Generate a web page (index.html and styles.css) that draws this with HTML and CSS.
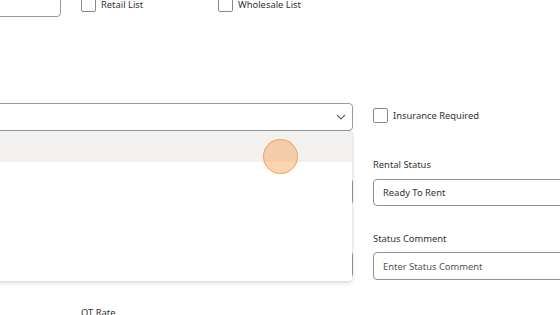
FILE: index.html
```html
<!DOCTYPE html>
<html>
<head>
<meta charset="utf-8">
<link rel="stylesheet" href="styles.css">
</head>
<body>
<div class="page">
  <div class="row row-top">
    <div class="box-input"></div>
    <label class="check check-retail"><span class="cb"></span><span>Retail List</span></label>
    <label class="check"><span class="cb"></span><span>Wholesale List</span></label>
  </div>

  <div class="grid">
    <div class="left">
      <div class="select">
        <svg class="chev" width="10" height="6" viewBox="0 0 10 6"><path d="M1 1 L5 5 L9 1" fill="none" stroke="#666" stroke-width="1.1"/></svg>
      </div>
      <div class="under under-1"></div>
      <div class="under under-2"></div>
      <div class="ot-label">OT Rate</div>

      <div class="menu">
        <div class="menu-item active"></div>
      </div>
      <div class="touch"></div>
    </div>

    <div class="right">
      <label class="check check-ins"><span class="cb"></span><span>Insurance Required</span></label>
      <div class="field-label fl-1">Rental Status</div>
      <div class="input">Ready To Rent</div>
      <div class="field-label fl-2">Status Comment</div>
      <div class="input input-2 placeholder">Enter Status Comment</div>
    </div>
  </div>
</div>
</body>
</html>
```

FILE: styles.css
```css
* { box-sizing: border-box; }
html, body { margin: 0; padding: 0; background: #fff; overflow: hidden; }
body {
  font-family: "Noto Sans", "Open Sans", sans-serif;
  font-size: 9.4px;
  color: #333;
  width: 560px;
  height: 315px;
}
.page { margin-left: -20px; width: 700px; }

.row-top {
  display: flex;
  align-items: flex-start;
  margin-top: -19px;
  height: 36px;
}
.box-input {
  width: 81px;
  height: 36px;
  border: 1px solid #9a9a9a;
  border-radius: 4px;
  flex: none;
}
.check {
  display: flex;
  align-items: center;
  gap: 5px;
  line-height: 15px;
  color: #333;
  white-space: nowrap;
}
.row-top .check { margin-top: 16px; }
.check-retail { margin-left: 20px; width: 137px; }
.cb {
  width: 15px;
  height: 15px;
  border: 1px solid #8a8a8a;
  border-radius: 2px;
  flex: none;
  background: #fff;
}

.grid {
  display: grid;
  grid-template-columns: 373px 1fr;
  column-gap: 20px;
  margin-top: 86px;
}
.left { position: relative; }
.select {
  height: 28px;
  border: 1px solid #9a9a9a;
  border-radius: 4px;
  position: relative;
  display: flex;
  align-items: center;
  justify-content: flex-end;
  padding-right: 6px;
}
.under {
  height: 27px;
  border: 1px solid #9a9a9a;
  border-radius: 4px;
}
.under-1 { margin-top: 47px; }
.under-2 { margin-top: 46px; }
.ot-label { margin-left: 101px; margin-top: 29px; line-height: 12px; }

.menu {
  position: absolute;
  left: 0;
  top: 28px;
  width: 372px;
  height: 150px;
  background: #fff;
  box-shadow: 0 2px 4px rgba(0,0,0,0.14), 1px 0 3px rgba(0,0,0,0.06);
  border-radius: 0 0 3px 3px;
}
.menu-item { height: 31px; }
.menu-item.active { background: #f2f1ef; }

.touch {
  position: absolute;
  left: 283px;
  top: 36px;
  width: 35px;
  height: 35px;
  border-radius: 50%;
  background: rgba(246, 152, 72, 0.42);
  border: 1.5px solid rgba(243, 150, 70, 0.75);
}

.right { display: flex; flex-direction: column; align-items: flex-start; }
.check-ins { margin-top: 5px; }
.field-label { line-height: 12px; color: #333; white-space: nowrap; }
.fl-1 { margin-top: 36px; }
.fl-2 { margin-top: 27px; }
.input {
  margin-top: 8px;
  width: 300px;
  height: 27px;
  border: 1px solid #8f8f8f;
  border-radius: 4px;
  padding-left: 9px;
  display: flex;
  align-items: center;
  color: #333;
}
.input-2 { margin-top: 7px; height: 28px; }
.input.placeholder { color: #555; }
```
